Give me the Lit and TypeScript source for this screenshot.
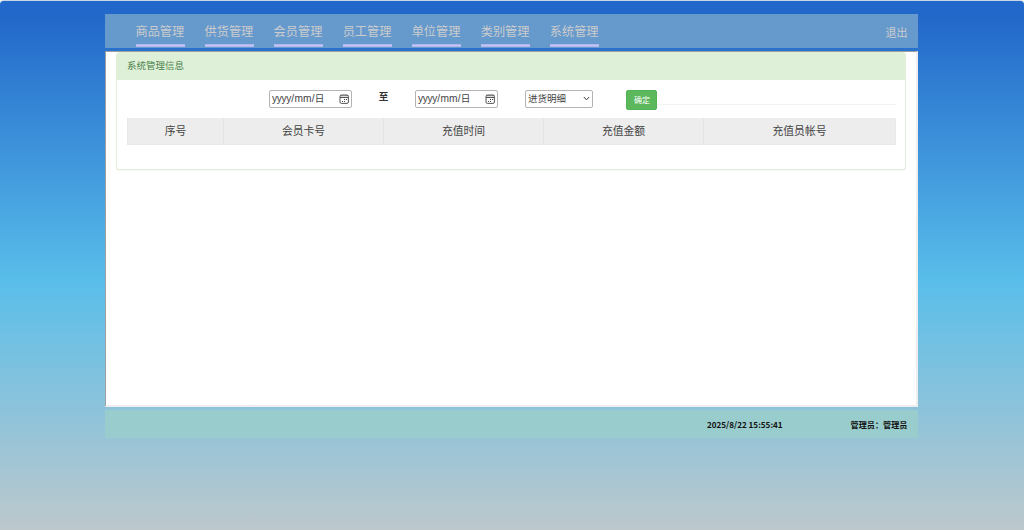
import { LitElement, html, css } from "lit";
import { customElement, property } from "lit/decorators.js";

@customElement("date-field")
class DateField extends LitElement {
  static styles = css`
    :host { display: block; }
    .box { box-sizing: border-box; width: 83px; height: 18px; border: 1px solid #b4b4b4; border-radius: 2px; background: #fff;
      display: flex; align-items: center; justify-content: space-between; padding: 0 2px; color: #444;
      font: 10.2px/16px "Liberation Sans", "Noto Sans CJK SC", sans-serif; white-space: nowrap; }
    .year { letter-spacing: -0.35px; }
    .slash { margin: 0 0.3px; }
    .day { font-size: 9.6px; }
    svg { display: block; width: 10px; height: 10px; }
  `;
  render() {
    return html`<div class="box"><span><span class="year">yyyy</span><span class="slash">/</span><span class="month">mm</span><span class="slash">/</span><span class="day">日</span></span>
      <svg viewBox="0 0 10 10" fill="none" stroke="#444" stroke-width="0.9">
        <rect x="1" y="1" width="8.4" height="8.4" rx="1.4"></rect>
        <path d="M1 1.8H9.4" stroke-width="0.6"></path>
        <path d="M1 3.5H9.4"></path>
        <path d="M5 5.5h1M7 5.5h1M3 7.5h1M5 7.5h1" stroke-width="1"></path>
      </svg></div>`;
  }
}

@customElement("data-table")
class DataTable extends LitElement {
  @property({ type: Array }) columns: string[] = [];
  static styles = css`
    .head { display: grid; grid-template-columns: 96px 160px 160px 160px 1fr; box-sizing: border-box; height: 27px;
      background: #ededed; border: 1px solid #e9e9e9; border-width: 0 1px 1px 1px; }
    .cell { text-align: center; font-size: 10.8px; line-height: 25px; color: #444; border-right: 1px solid #e4e4e4; }
    .cell:last-child { border-right: 0; }
  `;
  render() {
    return html`<div class="head">${this.columns.map((c) => html`<div class="cell">${c}</div>`)}</div>`;
  }
}

@customElement("app-root")
class AppRoot extends LitElement {
  private menu = ["商品管理", "供货管理", "会员管理", "员工管理", "单位管理", "类别管理", "系统管理"];
  private columns = ["序号", "会员卡号", "充值时间", "充值金额", "充值员帐号"];

  static styles = css`
    :host { display: block; height: 530px; background: #fff; font-family: "Noto Sans CJK SC", sans-serif; }
    .page { box-sizing: border-box; height: 530px; padding: 13px 106px 0 105px; border-top: 1px solid #c9d7e5; border-radius: 4px 4px 0 0;
      background: linear-gradient(#2268ca 0, #2268ca 3%, #59beea 53%, #bdc8cc 100%); overflow: hidden; }
    .nav { box-sizing: border-box; height: 34px; background: #6699cc; display: flex; padding: 0 10.5px 0 30.5px; gap: 20.05px; color: #ccc; }
    .item { box-sizing: border-box; height: 32.5px; width: 49px; font-size: 12.2px; line-height: 34px; white-space: nowrap;
      background: linear-gradient(#a4afe2, #c4c4fb 50%, #a4afe2) bottom / 100% 3px no-repeat; }
    .exit { margin-left: auto; font-size: 11px; line-height: 37px; }
    .frame { box-sizing: border-box; margin-top: 3px; height: 356px; background: #fff; border: 1.5px solid #eee; border-right-width: 2px; border-bottom-width: 2px;
      border-top-color: #a0a0a0; border-left-color: #a0a0a0; padding: 0 10px 0 10px; }
    .panel { box-sizing: border-box; height: 118px; border: 1px solid #e4efd9; border-top: 0; border-radius: 3px; box-shadow: 0 1px 1px rgba(0,0,0,.03); }
    .heading { box-sizing: border-box; height: 28px; padding-left: 10px; background: #dff0d8; border-radius: 3px 3px 0 0; color: #4b824c; font-size: 9.5px; line-height: 27px; }
    .content { padding: 0 9px 0 10px; }
    .filters { box-sizing: border-box; height: 38px; padding: 10px 0 0 142px; display: flex; align-items: flex-start; }
    .to { width: 63px; text-align: center; font-size: 9.6px; line-height: 13px; font-weight: 700; color: #333; }
    .select { box-sizing: border-box; width: 68px; height: 18px; margin-left: 27px; padding: 0 2px 1px; border: 1px solid #b4b4b4; border-radius: 2px;
      display: flex; align-items: center; justify-content: space-between; font-size: 9.5px; line-height: 15px; color: #444; }
    .chevron { width: 7px; height: 5px; }
    .ok { box-sizing: border-box; width: 31px; height: 20px; margin-left: 33.4px; border: 1px solid #53b253; border-radius: 2px; background: #5cb85c;
      color: #fff; text-align: center; font-size: 8px; line-height: 18px; }
    .rule { flex: 1; margin-top: 14px; height: 1px; background: #f3f3f3; }
    .footer { box-sizing: border-box; margin-top: 3px; height: 28px; padding: 0 10.5px 0 0; background: #99cccc; display: flex; justify-content: flex-end;
      gap: 68px; color: #111; font-size: 8.15px; font-weight: 700; line-height: 30px; white-space: nowrap; }
  `;

  render() {
    return html`<div class="page">
      <nav class="nav">${this.menu.map((m) => html`<a class="item">${m}</a>`)}<a class="exit">退出</a></nav>
      <main class="frame">
        <section class="panel">
          <div class="heading">系统管理信息</div>
          <div class="content">
            <div class="filters">
              <date-field></date-field>
              <div class="to">至</div>
              <date-field></date-field>
              <div class="select"><span>进货明细</span>
                <svg class="chevron" viewBox="0 0 7 5" fill="none" stroke="#333" stroke-width="1"><path d="M0.8 1L3.5 3.8L6.2 1"></path></svg>
              </div>
              <div class="ok">确定</div>
              <div class="rule"></div>
            </div>
            <data-table .columns=${this.columns}></data-table>
          </div>
        </section>
      </main>
      <footer class="footer"><span>2025/8/22 15:55:41</span><span>管理员：管理员</span></footer>
    </div>`;
  }
}
